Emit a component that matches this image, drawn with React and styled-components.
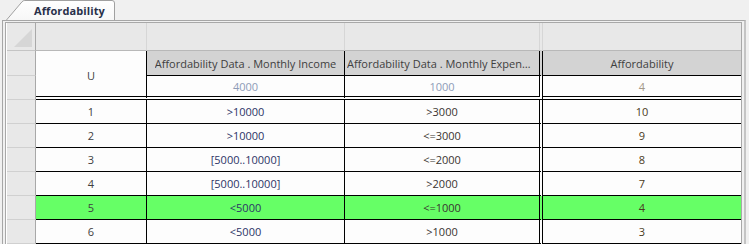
import React from "react";
import styled, { createGlobalStyle } from "styled-components";

const Global = createGlobalStyle`
  html, body { margin: 0; padding: 0; background: #f0f0f0; }
  body { font-family: "Open Sans", "Noto Sans", sans-serif; font-size: 11px; color: #3c3c3c; }
  * { box-sizing: border-box; }
`;

const Page = styled.div`
  width: 749px;
  height: 244px;
  overflow: hidden;
  background: #f0f0f0;
`;

const TabStrip = styled.div`
  height: 20px;
  display: flex;
  align-items: flex-end;
  padding-left: 6px;
`;

const Tab = styled.div`
  position: relative;
  width: 109px;
  height: 20px;
  display: flex;
  align-items: center;
  padding-left: 28px;
  padding-top: 1px;
`;

const TabShape = styled.svg`
  position: absolute;
  left: 0;
  top: 0;
  width: 109px;
  height: 20px;
`;

const TabLabel = styled.span`
  position: relative;
  font-weight: 700;
  font-size: 11px;
  color: #28304a;
  letter-spacing: 0.1px;
`;

const Panel = styled.div`
  margin-left: 2px;
  width: 744px;
  height: 224px;
  border: 1px solid #a6a6a6;
  border-bottom: none;
  border-right: 2px solid #c4c4c4;
  padding: 1px 0 0 2px;
`;

const Frame = styled.div`
  width: 737px;
  border: 1px solid #a8a8a8;
  border-bottom: none;
  padding-left: 1px;
  background: #ffffff;
`;

const Grid = styled.div`
  display: grid;
  grid-template-columns: 29px 111px 198px 198px 198px;
  grid-template-rows: 28px 25px 24px repeat(6, 24px);
`;

const RowHead = styled.div`
  background: #e8e8e8;
  border-right: 1px solid #a8a8a8;
  border-bottom: 1px solid ${(p) => (p.$corner ? "#c4c4c4" : "#d0d0d0")};
  display: flex;
  align-items: flex-end;
  justify-content: flex-end;
  padding: 0 3px 3px 0;
`;

const Band = styled.div`
  background: #e8e8e8;
  border-bottom: 1px solid #b8b8b8;
  border-right: ${(p) => (p.$double ? "4px double #d6d6d6" : p.$last ? "none" : "1px solid #d6d6d6")};
`;

const Cell = styled.div`
  display: flex;
  align-items: center;
  justify-content: ${(p) => (p.$left ? "flex-start" : "center")};
  padding: 0 ${(p) => (p.$left ? "6px" : "2px")} 0 2px;
  white-space: nowrap;
  overflow: hidden;
  font-size: 11px;
  background: ${(p) => (p.$head ? "#d3d3d3" : p.$hi ? "#66ff66" : "#fdfdfd")};
  color: ${(p) => p.$color || "#404040"};
  border-right: ${(p) => (p.$double ? "4px double #000" : p.$last ? "none" : "1px solid #000")};
  border-bottom: ${(p) => (p.$sep ? "4px double #000" : "1px solid #000")};
  grid-row: ${(p) => (p.$span ? `span ${p.$span}` : "auto")};
  padding-top: ${(p) => (p.$span ? "3px" : "0")};
`;

const Ellip = styled.span`
  display: block;
  max-width: 100%;
  overflow: hidden;
  text-overflow: ellipsis;
  white-space: nowrap;
`;

const rows = [
  ["1", ">10000", ">3000", "10"],
  ["2", ">10000", "<=3000", "9"],
  ["3", "[5000..10000]", "<=2000", "8"],
  ["4", "[5000..10000]", ">2000", "7"],
  ["5", "<5000", "<=1000", "4"],
  ["6", "<5000", ">1000", "3"],
];

const colColors = ["#404040", "#2c3466", "#3a3430", "#4a3a22"];

export default function App() {
  return (
    <Page>
      <Global />
      <TabStrip>
        <Tab>
          <TabShape viewBox="0 0 109 20">
            <defs>
              <linearGradient id="tabg" x1="0" y1="0" x2="0" y2="1">
                <stop offset="0" stopColor="#ffffff" />
                <stop offset="1" stopColor="#f7f7f7" />
              </linearGradient>
            </defs>
            <path
              d="M0.5 20 L16 1.8 Q17 0.5 18.8 0.5 L106 0.5 Q108.5 0.5 108.5 3 L108.5 20"
              fill="url(#tabg)"
              stroke="#a0a0a0"
              strokeWidth="1"
            />
          </TabShape>
          <TabLabel>Affordability</TabLabel>
        </Tab>
      </TabStrip>
      <Panel>
        <Frame>
          <Grid>
            <RowHead $corner>
              <svg width="18" height="18" viewBox="0 0 18 18">
                <polygon points="0,18 18,0 18,18" fill="#d6d6d6" />
              </svg>
            </RowHead>
            <Band />
            <Band />
            <Band $double />
            <Band $last />

            <RowHead />
            <Cell $span={2} $sep>U</Cell>
            <Cell $head>
              <Ellip>Affordability Data . Monthly Income</Ellip>
            </Cell>
            <Cell $head $double $left>
              <Ellip>Affordability Data . Monthly Expenses</Ellip>
            </Cell>
            <Cell $head $last>Affordability</Cell>

            <RowHead />
            <Cell $sep $color="#8e9cb8">4000</Cell>
            <Cell $sep $double $color="#8e9cb8">1000</Cell>
            <Cell $sep $last $color="#a49888">4</Cell>

            {rows.map((r) => {
              const hi = r[0] === "5";
              return (
                <React.Fragment key={r[0]}>
                  <RowHead />
                  {r.map((v, i) => (
                    <Cell
                      key={i}
                      $hi={hi}
                      $double={i === 2}
                      $last={i === 3}
                      $color={colColors[i]}
                    >
                      {v}
                    </Cell>
                  ))}
                </React.Fragment>
              );
            })}
          </Grid>
        </Frame>
      </Panel>
    </Page>
  );
}
